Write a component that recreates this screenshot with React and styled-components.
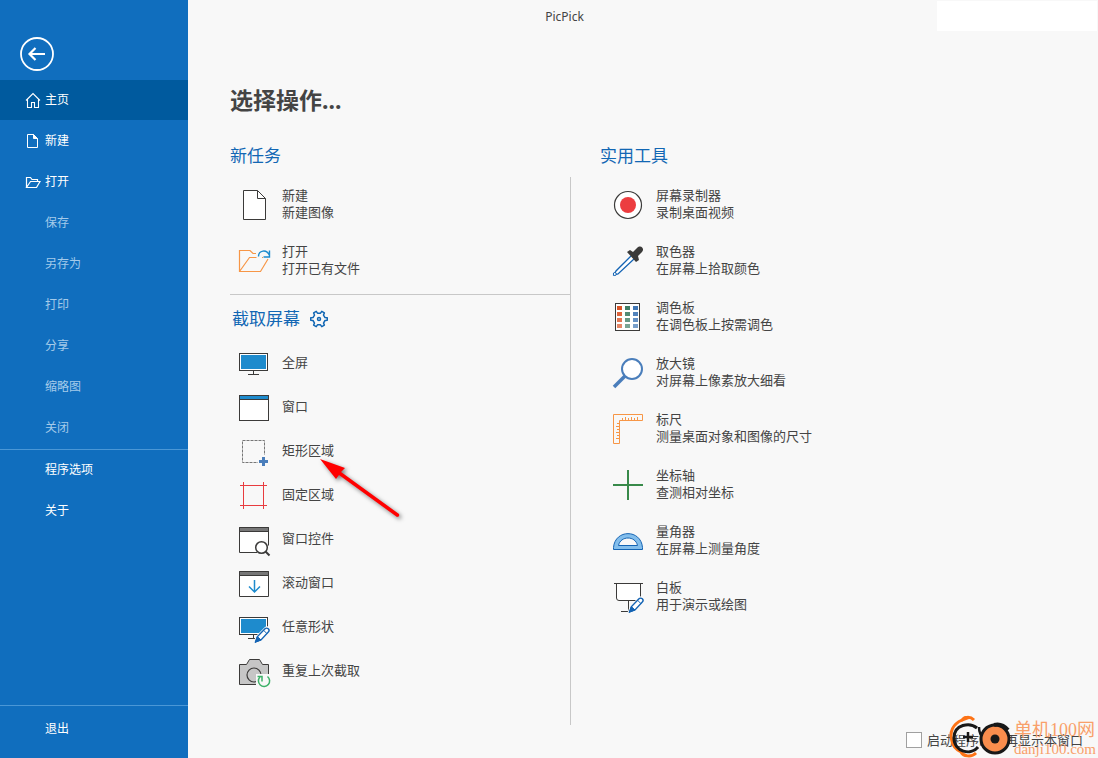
import React, { useState } from 'react';
import styled, { createGlobalStyle } from 'styled-components';

const DARK = '#3b3a39';
const BLUE = '#1267b4';
const SCREEN = '#1e8bcd';

const HomeIcon = () => (
  <svg width="16" height="16" viewBox="0 0 16 16" fill="none" stroke="#fff" strokeWidth="1.1">
    <path d="M1 8.5 8 1.5l7 7M2.5 7.5v8h4v-5h3v5h4v-8" />
  </svg>
);

const PageIcon = () => (
  <svg width="16" height="16" viewBox="0 0 16 16" fill="none" stroke="#fff">
    <path d="M2.5 1.5h6l4 4v9h-10z" />
    <path d="M8.5 1.5v4h4z" fill="#fff" />
  </svg>
);

const FolderIcon = () => (
  <svg width="16" height="16" viewBox="0 0 16 16" fill="none" stroke="#fff" strokeWidth="1.2">
    <path d="M1.5 13.5v-10h4l1.5 2h5.5v2M1.5 13.5l4-6h9.5l-3.5 6z" />
  </svg>
);

const BackIcon = () => (
  <svg width="34" height="34" viewBox="0 0 34 34" fill="none" stroke="#fff">
    <circle cx="17" cy="17" r="16" strokeWidth="1.8" />
    <path d="M25 17H9.5M15.5 11l-6 6 6 6" strokeWidth="2.2" />
  </svg>
);

const GearIcon = () => (
  <svg width="18" height="18" viewBox="0 0 24 24" fill="none" stroke={BLUE} strokeWidth="2" strokeLinejoin="round">
    <path d="M8.3 1.8 10 4.2h4l1.7-2.400 3.500 2-1.200 2.900 2 3.400 3 .3v3.200l-3 .4-2 3.400 1.200 2.800-3.500 2-1.700-2.400h-4l-1.700 2.400-3.500-2L6 17.400 4 14l-3-.4v-3.200l3-.3 2-3.400-1.200-2.900z" />
    <circle cx="12" cy="12" r="2" />
  </svg>
);

const Pencil = () => (
  <g transform="translate(17 16)">
    <path d="M0 16 2 10 10.5 1.5a2.5 2.5 0 0 1 4 4L6 14z" fill="#f8f8f8" stroke="#f8f8f8" strokeWidth="3" />
    <path d="M1 14.5 2.5 9.5 10 1.8a2.2 2.2 0 0 1 3.300 3.300L6 13z" fill="#fff" stroke="#1464b4" strokeWidth="1.4" />
    <path d="M0 15.5 2.300 9.500 6 13zM8.500 3.200l3.500 3.500" fill="#1464b4" stroke="#1464b4" />
  </g>
);

const icons = {
  page: (
    <>
      <path d="M5.5 1.5h14l8 8v21h-22z" fill="#fff" stroke={DARK} />
      <path d="M19.5 1.5v8h8" stroke={DARK} />
    </>
  ),
  folder: (
    <>
      <path d="M18 8.500h-3l-3-3H1.500v21h21l7.500-12.500M1.500 26.500l10-14h7M24 12.500h1" stroke="#f79646" strokeWidth="1.2" />
      <path d="M20.5 11.5c0-6 8-8 11-1M31.5 5.500v6.500h-6" stroke={SCREEN} strokeWidth="1.4" />
    </>
  ),
  monitor: (
    <>
      <rect x="1.5" y="6.5" width="28" height="17" fill="#fff" stroke={DARK} />
      <path d="M3 8h25v14H3z" fill={SCREEN} />
      <path d="M15.5 24v4M10 27.5h11" stroke={DARK} />
    </>
  ),
  window: (
    <>
      <rect x="1.5" y="4.5" width="29" height="25" fill="#fff" stroke={DARK} />
      <rect x="1.5" y="4.5" width="29" height="4" fill={SCREEN} stroke={DARK} />
    </>
  ),
  region: (
    <>
      <rect x="4.5" y="5.5" width="22" height="22" stroke="#777" strokeDasharray="3 1" />
      <path d="M20 20h10v12H20z" fill="#f8f8f8" />
      <path d="M25.5 22v9M21 26.5h9" stroke="#4a7ebb" strokeWidth="3" />
    </>
  ),
  fixed: <path d="M5.5 3v27M25.5 3v27M2 6.5h27M2 26.5h27" stroke="#e83c3f" />,
  control: (
    <>
      <path d="M20 29.5H1.5v-25h29v18" stroke={DARK} fill="#fff" />
      <path d="M1.5 4.5h29v4h-29z" stroke={DARK} fill="#777" />
      <path d="M19 29a8 8 0 0 1 11-11V31H19z" fill="#f8f8f8" />
      <circle cx="23.5" cy="24.5" r="5.8" fill="#fff" stroke={DARK} strokeWidth="1.5" />
      <path d="m27.5 28.5 4 4" stroke={DARK} strokeWidth="2" />
    </>
  ),
  scroll: (
    <>
      <path d="M1.5 4.5h29v25h-29z" stroke={DARK} fill="#fff" />
      <path d="M1.5 4.5h29v4h-29z" stroke={DARK} fill="#777" />
      <path d="M16.5 13v12M11 19.5l5.500 5.500 5.500-5.500" stroke={SCREEN} strokeWidth="1.5" />
    </>
  ),
  freehand: (
    <>
      <rect x="1.5" y="6.5" width="28" height="17" fill="#fff" stroke={DARK} />
      <path d="M3 8h25v14H3z" fill={SCREEN} />
      <path d="M15.5 24v4M10 27.5h8" stroke={DARK} />
      <Pencil />
    </>
  ),
  camera: (
    <>
      <path d="M1.5 9.5h7l3-5h10l3 5h6v20h-29z" fill="#c6c6c6" stroke={DARK} />
      <circle cx="16" cy="20" r="7" stroke={DARK} strokeWidth="1.2" />
      <path d="M18 19h14v14H18z" fill="#f8f8f8" />
      <path d="M22 22a5.600 5.600 0 1 0 7.500-.5M19.500 21.500h4.500v5" stroke="#3bb067" strokeWidth="1.5" />
    </>
  ),
  record: (
    <>
      <circle cx="16" cy="16" r="13.5" fill="#fff" stroke={DARK} strokeWidth="1.2" />
      <circle cx="16" cy="16" r="8" fill="#ec3d40" />
    </>
  ),
  picker: (
    <>
      <path d="m19 11-15 15-2 4 4-1 16-15" fill="#fff" stroke="#1464b4" strokeWidth="1.3" />
      <path d="m15 7 3-2 3 2 4-4c4-4 8 1 5 4l-4 4 1 4-3 2z" fill={DARK} />
      <circle cx="2.8" cy="29" r="1.5" fill="#fff" stroke="#1464b4" />
    </>
  ),
  palette: (
    <>
      <rect x="3.5" y="2.5" width="24" height="27" fill="#fff" stroke={DARK} />
      {[1, 0.9, 0.8, 0.7].map((opacity, row) =>
        ['#da5427', '#407e66', '#3f76b5'].map((color, col) => (
          <rect key={color} x={5 + col * 8} y={5 + row * 6} width="5" height="4" fill={color} opacity={opacity} />
        ))
      )}
    </>
  ),
  magnifier: (
    <>
      <circle cx="20" cy="12" r="10" fill="#fff" stroke="#4a7ebb" strokeWidth="2" />
      <path d="M13 19 2 30" stroke="#4a7ebb" strokeWidth="3.5" />
    </>
  ),
  ruler: (
    <path
      d="M1.5 1.5h29v6h-23v23h-6zM10.500 7V5M13.500 7V4M16.500 7V5M19.500 7V4M22.500 7V5M25.500 7V4M7 10.500H5M7 13.500H4M7 16.500H5M7 19.500H4M7 22.500H5M7 25.500H4"
      stroke="#f79646"
    />
  ),
  axis: <path d="M16 1v30M1 16h30" stroke="#388a4a" strokeWidth="2" />,
  protractor: (
    <path
      d="M1.5 24.5v-2C3 4 29 4 30.5 22.500v2zM6.500 20.500h19c-2-10-17-10-19 0z"
      fill="#83beec"
      fillRule="evenodd"
      stroke="#1464b4"
    />
  ),
  board: (
    <>
      <path d="M4 2.5v15q0 2 2 2h20q2 0 2-2v-15" fill="#fff" />
      <path d="M2 2.5h29M4.5 3v14q0 2.500 2.500 2.500h19M28.500 3v13M16.500 20v10M9 30.500h8" stroke={DARK} />
      <Pencil />
    </>
  ),
};

const fileMenu = [
  { label: '主页', icon: <HomeIcon />, active: true },
  { label: '新建', icon: <PageIcon /> },
  { label: '打开', icon: <FolderIcon /> },
  { label: '保存', disabled: true },
  { label: '另存为', disabled: true },
  { label: '打印', disabled: true },
  { label: '分享', disabled: true },
  { label: '缩略图', disabled: true },
  { label: '关闭', disabled: true },
];

const tasks = [
  { icon: 'page', name: '新建', desc: '新建图像' },
  { icon: 'folder', name: '打开', desc: '打开已有文件' },
];

const captures = [
  { icon: 'monitor', name: '全屏' },
  { icon: 'window', name: '窗口' },
  { icon: 'region', name: '矩形区域', pointed: true },
  { icon: 'fixed', name: '固定区域' },
  { icon: 'control', name: '窗口控件' },
  { icon: 'scroll', name: '滚动窗口' },
  { icon: 'freehand', name: '任意形状' },
  { icon: 'camera', name: '重复上次截取' },
];

const tools = [
  { icon: 'record', name: '屏幕录制器', desc: '录制桌面视频' },
  { icon: 'picker', name: '取色器', desc: '在屏幕上拾取颜色' },
  { icon: 'palette', name: '调色板', desc: '在调色板上按需调色' },
  { icon: 'magnifier', name: '放大镜', desc: '对屏幕上像素放大细看' },
  { icon: 'ruler', name: '标尺', desc: '测量桌面对象和图像的尺寸' },
  { icon: 'axis', name: '坐标轴', desc: '查测相对坐标' },
  { icon: 'protractor', name: '量角器', desc: '在屏幕上测量角度' },
  { icon: 'board', name: '白板', desc: '用于演示或绘图' },
];

const MenuItem = ({ label, icon, active, disabled }) => (
  <MenuButton $active={active} disabled={disabled}>
    <MenuIcon>{icon}</MenuIcon>
    <MenuLabel>{label}</MenuLabel>
  </MenuButton>
);

const Pointer = () => (
  <PointerSvg width="90" height="70" viewBox="0 0 90 70">
    <path d="M1 1 26 10 22 14 80 56q1 3-2 3L20 17 17 21z" fill="#f00" />
  </PointerSvg>
);

const Action = ({ icon, name, desc, pointed, compact }) => (
  <ActionButton $compact={compact}>
    <svg width="32" height="32" viewBox="0 0 32 32" fill="none" overflow="visible">
      {icons[icon]}
    </svg>
    <ActionText>
      <span>{name}</span>
      {desc && <span>{desc}</span>}
      {pointed && <Pointer />}
    </ActionText>
  </ActionButton>
);

const Watermark = () => (
  <WatermarkDiv>
    <svg width="66" height="44" viewBox="0 0 66 44" fill="none">
      <path d="M26 6C22 2 16 3 14 6 5 10 1 18 4 27c1 6 5 9 9 11 2 4 10 6 15 1" stroke="#fd7316" strokeWidth="3" />
      <path d="M15 3q5-3 6 2l-8 3z" fill="#fd7316" />
      <path d="M29 14C22 8 6 10 6 24s17 18 24 9" stroke="#181818" strokeWidth="3" />
      <path d="M20 18v10M15 23h10M31 13c0 6 2 9 5 9M39 13l-4 10" stroke="#181818" strokeWidth="2.500" />
      <circle cx="47" cy="25" r="14" fill="#f98d4d" stroke="#181818" strokeWidth="3" />
      <path d="M46 11q8-2 14 5" stroke="#181818" strokeWidth="4" />
      <circle cx="47" cy="25" r="4.5" fill="#181818" />
    </svg>
    <WatermarkText>
      <strong>单机100网</strong>
      <span>danji100.com</span>
    </WatermarkText>
  </WatermarkDiv>
);

const App = () => {
  const [hideOnStart, setHideOnStart] = useState(false);

  const hideOnStartHandler = () => setHideOnStart(!hideOnStart);

  return (
    <>
      <GlobalStyle />
      <LayoutDiv>
        <Sidebar>
          <BackButton aria-label="返回">
            <BackIcon />
          </BackButton>
          <MenuGroup>
            {fileMenu.map((item) => (
              <MenuItem key={item.label} {...item} />
            ))}
          </MenuGroup>
          <MenuGroup $line>
            <MenuItem label="程序选项" />
            <MenuItem label="关于" />
          </MenuGroup>
          <ExitGroup $line>
            <MenuItem label="退出" />
          </ExitGroup>
        </Sidebar>
        <Main>
          <TitleBar>
            <AppName>PicPick</AppName>
            <WindowControls />
          </TitleBar>
          <Content>
            <Title>选择操作...</Title>
            <Columns>
              <LeftColumn>
                <SectionTitle>新任务</SectionTitle>
                <LeftPanel>
                  <TaskList>
                    {tasks.map((item) => (
                      <Action key={item.name} {...item} />
                    ))}
                  </TaskList>
                  <CaptureHeader>
                    <SectionTitle>截取屏幕</SectionTitle>
                    <GearButton aria-label="截取设置">
                      <GearIcon />
                    </GearButton>
                  </CaptureHeader>
                  {captures.map((item) => (
                    <Action key={item.name} compact {...item} />
                  ))}
                </LeftPanel>
              </LeftColumn>
              <RightColumn>
                <SectionTitle>实用工具</SectionTitle>
                <RightPanel>
                  {tools.map((item) => (
                    <Action key={item.name} {...item} />
                  ))}
                </RightPanel>
              </RightColumn>
            </Columns>
          </Content>
          <Footer>
            <StartupLabel>
              <StartupCheckbox type="checkbox" checked={hideOnStart} onChange={hideOnStartHandler} />
              <span>启动程序时不再显示本窗口</span>
            </StartupLabel>
            <Watermark />
          </Footer>
        </Main>
      </LayoutDiv>
    </>
  );
};

export default App;

const GlobalStyle = createGlobalStyle`
  * {
    box-sizing: border-box;
  }
  body {
    margin: 0;
    background: #f8f8f8;
    color: #444;
    font-family: 'Noto Sans', 'Noto Sans CJK SC', sans-serif;
    font-size: 13px;
  }
  button {
    padding: 0;
    border: 0;
    background: none;
    color: inherit;
    font: inherit;
    text-align: left;
    cursor: pointer;
  }
  svg {
    flex: none;
  }
`;

const LayoutDiv = styled.div`
  display: flex;
  min-height: 100vh;
`;

const Sidebar = styled.nav`
  width: 188px;
  flex: none;
  display: flex;
  flex-direction: column;
  background: #106ebe;
  color: #fff;
  font-size: 12px;
`;

const BackButton = styled.button`
  height: 80px;
  padding: 28px 20px 0;
  display: flex;
  align-items: center;
  align-self: flex-start;
`;

const MenuGroup = styled.div`
  display: flex;
  flex-direction: column;
  gap: 1px;
  padding-bottom: 1px;
  border-top: ${(props) => (props.$line ? '1px solid #4a97d6' : 'none')};
`;

const ExitGroup = styled(MenuGroup)`
  margin-top: auto;
  padding: 3px 0 9px;
`;

const MenuButton = styled.button`
  height: 40px;
  padding-left: 25px;
  display: flex;
  align-items: center;
  gap: 4px;
  background: ${(props) => (props.$active ? '#005a9e' : 'transparent')};
  color: ${(props) => (props.disabled ? '#a5cbea' : '#fff')};
`;

const MenuIcon = styled.span`
  width: 16px;
  height: 16px;
  display: flex;
`;

const MenuLabel = styled.span`
  padding-bottom: 2px;
`;

const Main = styled.main`
  flex: 1;
  min-width: 0;
  display: flex;
  flex-direction: column;
`;

const TitleBar = styled.header`
  display: flex;
  align-items: center;
  padding: 1px 1px 0 4px;
`;

const AppName = styled.div`
  flex: 1;
  text-align: center;
  font-size: 12px;
`;

const WindowControls = styled.div`
  width: 160px;
  height: 30px;
  background: #fff;
`;

const Content = styled.div`
  flex: 1;
  display: flex;
  flex-direction: column;
  padding: 52px 42px 0;
`;

const Title = styled.h1`
  margin: 0 0 22px;
  font-size: 23px;
  line-height: 34px;
  font-weight: 700;
`;

const Columns = styled.div`
  flex: 1;
  display: flex;
`;

const Column = styled.section`
  display: flex;
  flex-direction: column;
`;

const LeftColumn = styled(Column)`
  width: 341px;
  flex: none;
`;

const RightColumn = styled(Column)`
  flex: 1;
  padding-left: 29px;
`;

const SectionTitle = styled.h2`
  margin: 0;
  color: ${BLUE};
  font-size: 17px;
  line-height: 34px;
  font-weight: 400;
`;

const Panel = styled.div`
  flex: 1;
  display: flex;
  flex-direction: column;
  margin-top: 4px;
`;

const LeftPanel = styled(Panel)`
  border-right: 1px solid #c8c8c8;
`;

const RightPanel = styled(Panel)`
  padding-left: 4px;
`;

const TaskList = styled.div`
  padding-bottom: 5px;
  border-bottom: 1px solid #c8c8c8;
`;

const CaptureHeader = styled.div`
  height: 46px;
  padding: 2px 0 0 2px;
  display: flex;
  align-items: center;
  gap: 10px;
`;

const GearButton = styled.button`
  display: flex;
`;

const ActionButton = styled.button`
  width: 100%;
  height: ${(props) => (props.$compact ? '44px' : '56px')};
  padding-left: 8px;
  display: flex;
  align-items: center;
  gap: 12px;
`;

const ActionText = styled.span`
  position: relative;
  padding-bottom: 2px;
  display: flex;
  flex-direction: column;
  line-height: 17px;
`;

const PointerSvg = styled.svg`
  position: absolute;
  top: 16px;
  left: 37px;
  z-index: 1;
  filter: drop-shadow(2px 2px 2px rgba(0, 0, 0, 0.5));
  pointer-events: none;
`;

const Footer = styled.footer`
  position: relative;
  height: 33px;
  padding: 0 15px 3px;
  display: flex;
  align-items: center;
  justify-content: flex-end;
`;

const StartupLabel = styled.label`
  display: flex;
  align-items: center;
  gap: 5px;
  & span {
    padding-bottom: 2px;
  }
`;

const StartupCheckbox = styled.input`
  appearance: none;
  width: 16px;
  height: 16px;
  margin: 0;
  border: 1px solid #a0a0a0;
  background: #fff;
  &:checked {
    background: ${BLUE};
  }
`;

const WatermarkDiv = styled.div`
  position: absolute;
  right: 2px;
  bottom: 0;
  display: flex;
  align-items: flex-end;
  pointer-events: none;
`;

const WatermarkText = styled.div`
  display: flex;
  flex-direction: column;
  color: #f9a06a;
  font-family: 'Liberation Serif', 'Noto Sans CJK SC', serif;
  & strong {
    font-size: 18px;
    line-height: 20px;
    font-weight: 400;
  }
  & span {
    font-size: 15px;
    line-height: 18px;
  }
`;
